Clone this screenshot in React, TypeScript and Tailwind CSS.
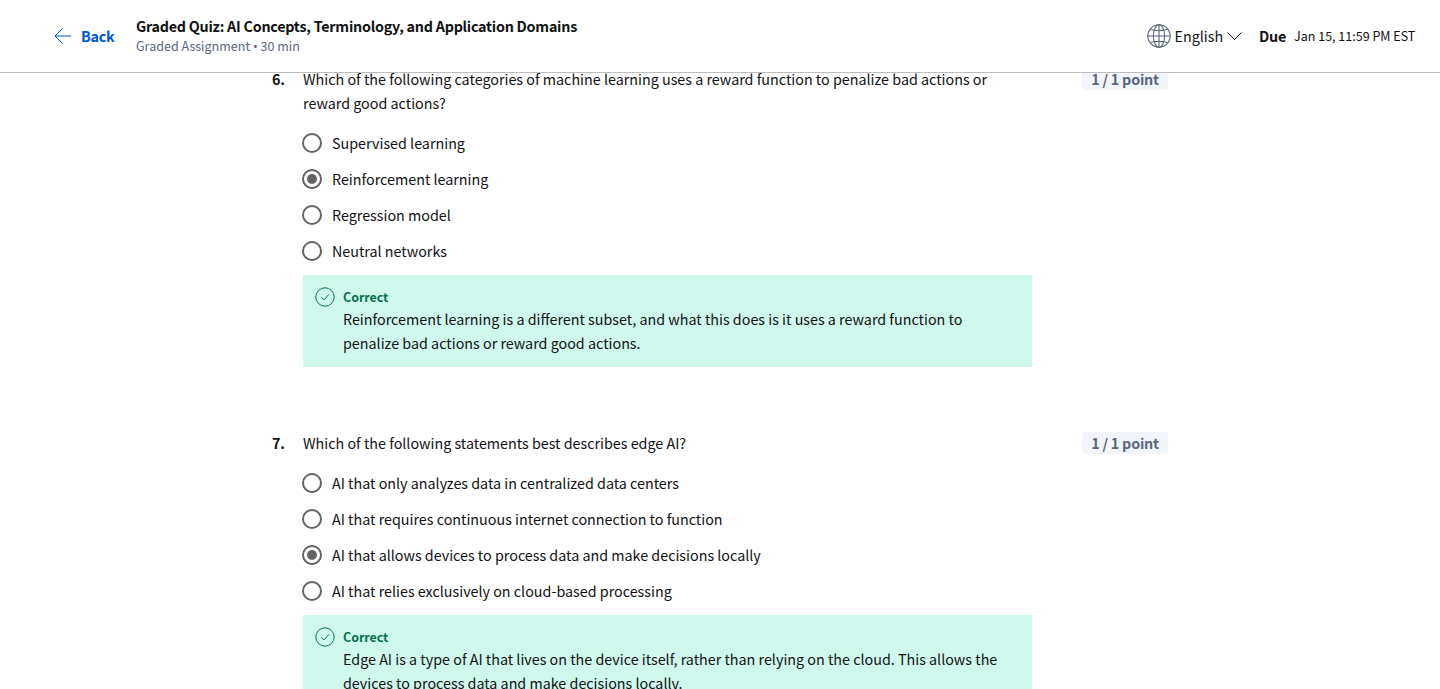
import React from "react";

type Question = {
  number: number;
  prompt: string[];
  options: string[];
  selected: number;
  feedback: string[];
};

const questions: Question[] = [
  {
    number: 6,
    prompt: [
      "Which of the following categories of machine learning uses a reward function to penalize bad actions or",
      "reward good actions?",
    ],
    options: ["Supervised learning", "Reinforcement learning", "Regression model", "Neutral networks"],
    selected: 1,
    feedback: [
      "Reinforcement learning is a different subset, and what this does is it uses a reward function to",
      "penalize bad actions or reward good actions.",
    ],
  },
  {
    number: 7,
    prompt: ["Which of the following statements best describes edge AI?"],
    options: [
      "AI that only analyzes data in centralized data centers",
      "AI that requires continuous internet connection to function",
      "AI that allows devices to process data and make decisions locally",
      "AI that relies exclusively on cloud-based processing",
    ],
    selected: 2,
    feedback: [
      "Edge AI is a type of AI that lives on the device itself, rather than relying on the cloud. This allows the",
      "devices to process data and make decisions locally.",
    ],
  },
];

function Lines({ lines }: { lines: string[] }) {
  return (
    <>
      {lines.map((line) => (
        <span key={line} className="block whitespace-nowrap">{line}</span>
      ))}
    </>
  );
}

function Radio({ checked }: { checked: boolean }) {
  return (
    <span className="flex size-5 shrink-0 items-center justify-center rounded-full border-2 border-[#636363]">
      {checked && <span className="size-2.5 rounded-full bg-[#636363]" />}
    </span>
  );
}

function GlobeIcon() {
  return (
    <svg className="size-6" viewBox="0 0 24 24" fill="none" stroke="#5b6780" strokeWidth="1.1">
      <circle cx="12" cy="12" r="11.200" />
      <ellipse cx="12" cy="12" rx="5.600" ry="11.200" />
      <path d="M12 .8v22.400M.8 12h22.400M3.500 5.300c4.500 1.900 12.500 1.900 17 0M3.500 18.700c4.500-1.900 12.500-1.900 17 0" />
    </svg>
  );
}

function QuestionBlock({ q }: { q: Question }) {
  return (
    <section className="flex items-start">
      <div className="w-[31px] shrink-0 font-bold tracking-[-0.2px]">{q.number}.</div>
      <div className="w-[729px] shrink-0">
        <p><Lines lines={q.prompt} /></p>
        <ul className="-ml-px pt-[10px]">
          {q.options.map((option, i) => (
            <li key={option} className="flex h-9 items-center gap-[10px]">
              <Radio checked={i === q.selected} />
              <span className="whitespace-nowrap">{option}</span>
            </li>
          ))}
        </ul>
        <div className="mt-[6px] flex h-[92px] bg-[#d0f9ed] pt-3 pl-3">
          <svg className="size-5 shrink-0" viewBox="0 0 20 20" fill="none" stroke="#087051">
            <circle cx="10" cy="10" r="9.200" />
            <path d="M6.300 10.300l2.600 2.600L14 7.300" />
          </svg>
          <div className="pl-2">
            <div className="text-[12.53px] leading-5 font-bold tracking-[-0.08px] text-[#087051]">Correct</div>
            <p><Lines lines={q.feedback} /></p>
          </div>
        </div>
      </div>
      <div className="mt-px ml-[50px] flex h-[22px] w-[86px] items-center justify-center rounded bg-[#f2f5fa] font-bold tracking-[-0.2px] text-[#5b6780]">
        1 / 1 point
      </div>
    </section>
  );
}

export default function App() {
  return (
    <div className="flex h-[689px] flex-col overflow-hidden bg-white font-['Noto_Sans_CJK_SC',sans-serif] text-[14.32px] leading-6 text-[#0f1114]">
      <header className="z-10 flex h-[73px] shrink-0 items-center border-b border-[#bdbdbd] bg-white">
        <a className="ml-[54px] flex w-[82px] items-center gap-[10px] font-bold tracking-[-0.25px] text-[#0056d2]">
          <svg className="h-4 w-[17px]" viewBox="0 0 17 16" fill="none" stroke="currentColor">
            <path d="M17 8H1M8.500 .5L1 8l7.500 7.500" />
          </svg>
          Back
        </a>
        <div className="flex-1">
          <h1 className="leading-5 font-bold tracking-[-0.24px]">
            Graded Quiz: AI Concepts, Terminology, and Application Domains
          </h1>
          <p className="text-[12.53px] leading-5 text-[#5b6780]">
            Graded Assignment <span className="font-['Noto_Sans']">•</span> 30 min
          </p>
        </div>
        <div className="flex w-[293px] items-center">
          <GlobeIcon />
          <span className="ml-[3.500px] w-[49.500px]">English</span>
          <svg className="ml-[3px] h-2 w-[15px]" viewBox="0 0 15 8" fill="none" stroke="#0f1114">
            <path d="M.5 .5l7 7 7-7" />
          </svg>
          <span className="ml-[17px] w-[35px] font-bold tracking-[-0.2px]">Due</span>
          <span className="text-[12.53px] whitespace-nowrap">Jan 15, 11:59 PM EST</span>
        </div>
      </header>
      <main className="-mt-[6px] flex flex-col gap-16 overflow-hidden pl-[272px]">
        {questions.map((q) => <QuestionBlock key={q.number} q={q} />)}
      </main>
    </div>
  );
}
